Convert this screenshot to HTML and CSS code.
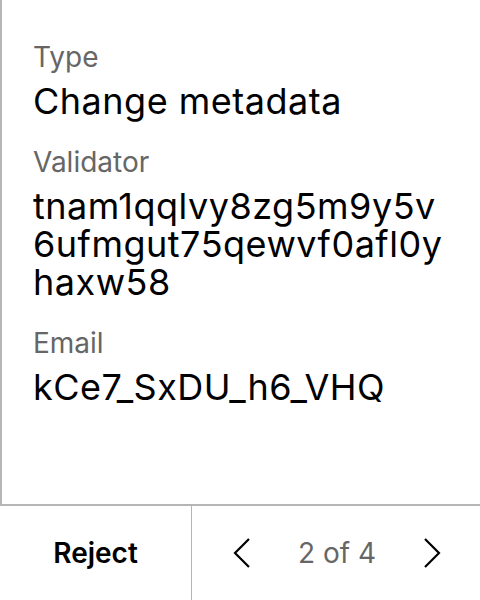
FILE: index.html
```html
<!DOCTYPE html>
<html>
<head>
<meta charset="utf-8">
<link rel="stylesheet" href="styles.css">
</head>
<body>
<div class="screen">
  <div class="content">
    <div class="field">
      <div class="label">Type</div>
      <div class="value">Change metadata</div>
    </div>
    <div class="field">
      <div class="label">Validator</div>
      <div class="value">tnam1qqlvy8zg5m9y5v<br>6ufmgut75qewvf0afl0y<br>haxw58</div>
    </div>
    <div class="field">
      <div class="label">Email</div>
      <div class="value">kCe7_SxDU_h6_VHQ</div>
    </div>
  </div>
  <div class="footer">
    <div class="reject">Reject</div>
    <div class="pager">
      <svg class="chev" width="20" height="32" viewBox="0 0 20 32"><path d="M17 2 L3 16 L17 30" fill="none" stroke="#000" stroke-width="2.2"/></svg>
      <span class="count">2 of 4</span>
      <svg class="chev" width="20" height="32" viewBox="0 0 20 32"><path d="M3 2 L17 16 L3 30" fill="none" stroke="#000" stroke-width="2.2"/></svg>
    </div>
  </div>
</div>
</body>
</html>
```
FILE: styles.css
```css
* { box-sizing: border-box; }
html, body { margin: 0; padding: 0; background: #fff; }
body { font-family: Inter, "Noto Sans", sans-serif; color: #000; }
.screen { width: 480px; height: 600px; display: flex; flex-direction: column; }
.content { flex: 1; border-left: 2px solid #b5b5b5; padding: 39px 0 0 31px; display: flex; flex-direction: column; gap: 24px; }
.field { display: flex; flex-direction: column; gap: 7px; }
.label { font-size: 28px; line-height: 36px; color: #666; }
.value { font-size: 36px; line-height: 38px; letter-spacing: 0.5px; }
.footer { height: 96px; border-top: 2px solid #b5b5b5; display: flex; }
.reject { width: 192px; border-right: 1px solid #b5b5b5; display: flex; align-items: center; justify-content: center; font-size: 28px; font-weight: 600; }
.pager { flex: 1; display: flex; align-items: center; justify-content: space-between; padding: 0 38px 0 40px; }
.count { font-size: 28px; color: #666; }
.chev { display: block; }
```
